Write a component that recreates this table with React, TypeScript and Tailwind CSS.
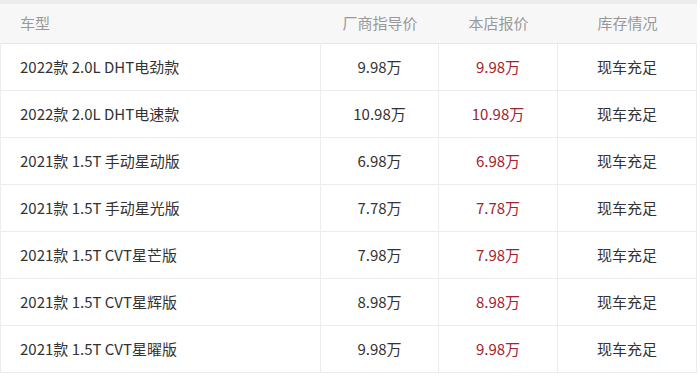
const rows = [
  ["2022款 2.0L DHT电劲款", "9.98万", "9.98万"],
  ["2022款 2.0L DHT电速款", "10.98万", "10.98万"],
  ["2021款 1.5T 手动星动版", "6.98万", "6.98万"],
  ["2021款 1.5T 手动星光版", "7.78万", "7.78万"],
  ["2021款 1.5T CVT星芒版", "7.98万", "7.98万"],
  ["2021款 1.5T CVT星辉版", "8.98万", "8.98万"],
  ["2021款 1.5T CVT星曜版", "9.98万", "9.98万"],
];

const font = { fontFamily: '"Noto Sans CJK SC", "Noto Sans", sans-serif' };

export default function App() {
  return (
    <div className="w-[700px] h-[378px] bg-white" style={font}>
      <div className="w-[697px]">
        <div className="h-[4px] bg-[#ececec]" />
        <div className="flex h-[40px] items-center bg-[#f7f7f7] border-b border-[#e8e8e8] text-[15px] text-[#999]">
          <div className="w-[321px] pl-5">车型</div>
          <div className="w-[118px] text-center">厂商指导价</div>
          <div className="w-[119px] text-center">本店报价</div>
          <div className="w-[139px] text-center">库存情况</div>
        </div>
        {rows.map(([name, msrp, price]) => (
          <div
            key={name}
            className="flex h-[47px] items-center border-b border-l border-r border-[#ececec] text-[15px] text-[#333]"
          >
            <div className="w-[320px] h-full flex items-center pl-[19px] border-r border-[#ececec]">
              {name}
            </div>
            <div className="w-[118px] h-full flex items-center justify-center border-r border-[#ececec]">
              {msrp}
            </div>
            <div className="w-[119px] h-full flex items-center justify-center border-r border-[#ececec] text-[#a3232f]">
              {price}
            </div>
            <div className="flex-1 h-full flex items-center justify-center">现车充足</div>
          </div>
        ))}
      </div>
    </div>
  );
}
